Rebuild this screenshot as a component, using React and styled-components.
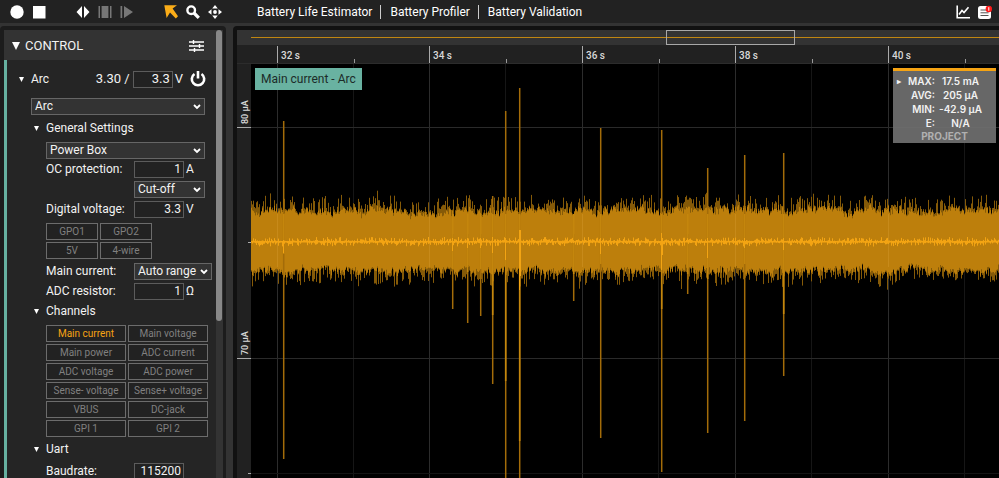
import React, { useEffect, useId, useState } from 'react';
import styled, { createGlobalStyle } from 'styled-components';

const GlobalStyle = createGlobalStyle`
    * {
        box-sizing: border-box;
    }
    body {
        margin: 0;
        background-color: #333333;
        color: #f2f2f2;
        font-family: Roboto, "Liberation Sans", sans-serif;
        font-size: 12px;
        line-height: 20px;
    }
    button, input, select {
        font: inherit;
        color: inherit;
    }
`;
const Page = styled.div`
    display: flex;
    flex-direction: column;
    height: 100vh;
    overflow: hidden;
`;
const Toolbar = styled.header`
    display: flex;
    align-items: center;
    flex: none;
    height: 23px;
    padding: 0 7px 0 10px;
    background-color: #222222;
`;
const ToolGroup = styled.div`
    display: flex;
    align-items: center;
    gap: 8px;
    margin-right: ${({ $after }) => $after || 0}px;
`;
const IconButton = styled.button`
    display: flex;
    padding: 0;
    border: none;
    background: none;
    color: ${({ $color }) => $color || '#ffffff'};
    cursor: pointer;
`;
const Nav = styled.nav`
    display: flex;
    align-items: center;
    flex: 1;
`;
const NavLink = styled.a`
    color: #ffffff;
    font-size: 12px;
    line-height: 14px;
    text-decoration: none;
    padding: 0 8px 0 9px;

    & + & {
        border-left: 1px solid #cccccc;
    }
`;
const Body = styled.div`
    display: flex;
    flex: 1;
    gap: 7px;
    min-height: 0;
    padding-top: 3px;
`;
const Sidebar = styled.aside`
    display: flex;
    flex: none;
    width: 226px;
    padding: 4px 3px 0 4px;
    border-radius: 4px 4px 0 0;
    background-color: #1c1c1c;
    overflow: hidden;
`;
const SidebarContent = styled.div`
    flex: 1;
    min-width: 0;
    overflow: hidden;
`;
const ScrollTrack = styled.div`
    width: 7px;
    background-color: #333333;
`;
const ScrollThumb = styled.div`
    width: 6px;
    height: 65%;
    border-radius: 3px;
    background-color: #888888;
`;
const PanelHeader = styled.div`
    display: flex;
    align-items: center;
    justify-content: space-between;
    height: 30px;
    padding: 2px 12px 0 8px;
    background-color: #333333;
`;
const PanelTitle = styled.h2`
    display: flex;
    align-items: center;
    gap: 5px;
    margin: 0;
    font-size: 13px;
    font-weight: 400;
`;
const Device = styled.section`
    padding: 8px 0 0 12px;
    border-left: 3px solid #66b0a0;
    background-color: #252525;
`;
const Section = styled.div`
    padding: 3px 0 0 15px;
`;
const Heading = styled.h3`
    display: flex;
    align-items: center;
    gap: 7px;
    height: 20px;
    margin: 0;
    font-size: 12px;
    font-weight: 400;
`;
const DeviceRow = styled.div`
    display: flex;
    align-items: center;
    height: 22px;
    padding-right: 10px;
`;
const Voltage = styled.div`
    display: flex;
    align-items: center;
    flex: 1;
    justify-content: flex-end;
    padding-right: 7px;
    font-size: 13px;
`;
const Reading = styled.span`
    padding-right: 3px;
`;
const Fields = styled.div`
    padding: ${({ $top }) => $top || 0}px 0 0 12px;
`;
const Field = styled.div`
    display: flex;
    align-items: center;
    height: 20px;
`;
const Label = styled.label`
    width: 88px;
    white-space: nowrap;
`;
const Input = styled.input`
    width: ${({ $width }) => $width || 50}px;
    height: 17px;
    margin-right: 2px;
    padding: 0 2px;
    border: 1px solid #5c5c5c;
    background-color: #222222;
    text-align: right;
`;
const SelectBox = styled.div`
    position: relative;
    width: ${({ $width }) => $width}px;
    margin-left: ${({ $indent }) => $indent || 0}px;
`;
const Select = styled.select`
    appearance: none;
    display: block;
    width: 100%;
    height: 17px;
    padding: 0 14px 0 3px;
    border: 1px solid #666666;
    border-radius: 0;
    background-color: #333333;
    line-height: 15px;
`;
const Chevron = styled.svg`
    position: absolute;
    top: 6px;
    right: 4px;
    pointer-events: none;
`;
const ToggleGrid = styled.div`
    display: grid;
    grid-template-columns: repeat(2, ${({ $column }) => $column}px);
    gap: 2px;
    padding: 4px 0 2px;
`;
const Toggle = styled.button`
    height: 17px;
    padding: 0;
    border: 1px solid #6c6c6c;
    background-color: #222222;
    color: ${({ $active }) => ($active ? '#f5a313' : '#808080')};
    font-size: 10px;
    line-height: 15px;
    white-space: nowrap;
    cursor: pointer;
`;
const ChartPanel = styled.main`
    display: flex;
    flex-direction: column;
    flex: 1;
    min-width: 0;
    padding: 4px 0 0 4px;
    border-radius: 4px 0 0 0;
    background-color: #111111;
`;
const Overview = styled.svg`
    flex: none;
    width: 100%;
    height: 15px;
    background-color: #333333;
`;
const Ruler = styled.svg`
    flex: none;
    width: 100%;
    height: 19px;
    border-bottom: 1px solid #2c2c2c;
    background-color: #212121;
`;
const PlotRow = styled.div`
    display: flex;
    flex: 1;
    min-height: 0;
`;
const Axis = styled.svg`
    flex: none;
    width: 14px;
    height: 100%;
    background-color: #212121;
`;
const PlotArea = styled.div`
    position: relative;
    flex: 1;
    min-width: 0;
    background-color: #000000;
`;
const Plot = styled.svg`
    display: block;
    width: 100%;
    height: 100%;
`;
const AxisText = styled.text`
    fill: #d8d8d8;
    font-size: ${({ $small }) => ($small ? 9 : 10)}px;
    font-weight: 500;
`;
const ChannelTag = styled.div`
    position: absolute;
    top: 4px;
    left: 4px;
    padding: 1px 6px;
    background-color: #69b2a1;
    color: #1c2b28;
`;
const Stats = styled.div`
    position: absolute;
    top: 4px;
    right: 3px;
    width: 103px;
    padding: 3px 14px 1px 4px;
    border-top: 3px solid #f5a313;
    background-color: rgba(112, 112, 112, 0.92);
    font-family: Inter, "Liberation Sans", sans-serif;
    font-size: 10px;
    font-weight: 600;
    line-height: 14px;
    white-space: nowrap;
`;
const StatRow = styled.div`
    display: grid;
    grid-template-columns: 38px 1fr;
    column-gap: 4px;
    position: relative;
`;
const StatName = styled.span`
    text-align: right;
`;
const StatValue = styled.span`
    text-align: center;
`;
const Marker = styled.span`
    position: absolute;
    left: 0;
    font-size: 8px;
`;
const Project = styled.div`
    padding-left: 10px;
    color: #b0b0b0;
    font-weight: 700;
    line-height: 12px;
    text-align: center;
`;

const stats = [
    ['MAX:', '17.5 mA'],
    ['AVG:', '205 µA'],
    ['MIN:', '-42.9 µA'],
    ['E:', 'N/A'],
];
const channels = [
    'Main current', 'Main voltage', 'Main power', 'ADC current',
    'ADC voltage', 'ADC power', 'Sense- voltage', 'Sense+ voltage',
    'VBUS', 'DC-jack', 'GPI 1', 'GPI 2',
];

// x, top, bottom, bottom of the brighter part
const peaks = [
    [32, 57, 395, 190], [201, 170, 245, 205], [216, 170, 259, 208], [229, 170, 252, 205],
    [241, 132, 320, 251], [254, 47, 2000, 317], [268, 24, 2000, 377], [349, 64, 374, 200],
    [410, 66, 408, 245], [456, 104, 369, 215], [493, 91, 357, 200], [532, 89, 312, 250],
    [322, 170, 237, 210], [436, 170, 230, 210],
];
const dips = {
    32: [176, 189], 201: [174, 187], 216: [174, 184], 229: [174, 184], 241: [173, 189],
    254: [174, 196], 268: [166, 226], 269: [166, 212], 349: [174, 190], 410: [169, 206],
    411: [174, 191], 456: [174, 194], 493: [174, 184], 532: [174, 186],
};

const random = (seed) => () => {
    seed = (seed * 1664525 + 1013904223) % 4294967296;
    return seed / 4294967296;
};

const buildSignal = (count) => {
    const next = random(41);
    let band = '';
    let fringe = '';
    let average = '';
    let upper = 0;
    let lower = 0;
    for (let x = 0; x < count; x++) {
        upper = upper * 0.8 + (next() - 0.5) * 4;
        lower = lower * 0.8 + (next() - 0.5) * 4;
        const top = 147 - (next() - 0.5) * 6 + upper;
        const bottom = 206 + (next() - 0.5) * 6 + lower;
        const up = top - 1 - Math.pow(next(), 2.6) * 14;
        const down = bottom + 1 + Math.pow(next(), 2.6) * 13;
        const dip = dips[x] || [177 - Math.pow(next(), 3) * 4, 178.5 + Math.pow(next(), 3) * 4];
        band += `M${x + 0.5} ${top.toFixed(1)}V${bottom.toFixed(1)}`;
        fringe += `M${x + 0.5} ${up.toFixed(1)}V${down.toFixed(1)}`;
        average += `M${x + 0.5} ${dip[0].toFixed(1)}V${dip[1].toFixed(1)}`;
    }
    return { band, fringe, average };
};
const signal = buildSignal(2400);

// Ticks that fit in the window, the last ones with room for their label
const useTicks = () => {
    const [size, setSize] = useState([window.innerWidth, window.innerHeight]);
    useEffect(() => {
        const update = () => setSize([window.innerWidth, window.innerHeight]);
        window.addEventListener('resize', update);
        return () => window.removeEventListener('resize', update);
    }, []);
    const columns = Math.max(1, Math.floor((size[0] - 310) / 152.8) + 1);
    const rows = Math.max(1, Math.floor((size[1] - 130) / 231) + 1);
    return {
        seconds: Array.from({ length: columns }, (_, i) => ({ x: Math.round(25.5 + i * 152.8), text: `${32 + i * 2} s` })),
        levels: Array.from({ length: rows }, (_, i) => ({ y: 63 + i * 231, text: `${80 - i * 10} µA` })),
    };
};

const Triangle = ({ size = 5 }) => (
    <svg width={size} height={size} viewBox="0 0 10 10" aria-hidden="true">
        <path d="M0 0H10L5 10Z" fill="#ffffff" />
    </svg>
);

const ToolIcon = ({ label, color, width = 14, children }) => (
    <IconButton type="button" aria-label={label} $color={color}>
        <svg width={width} height="14" viewBox={`0 0 ${width} 14`} fill="currentColor">{children}</svg>
    </IconButton>
);

const DropDown = ({ id, label, width, indent, value }) => (
    <SelectBox $width={width} $indent={indent}>
        <Select id={id} aria-label={label}><option>{value}</option></Select>
        <Chevron width="8" height="6" viewBox="0 0 8 6" fill="none" stroke="#ffffff" strokeWidth="1.8">
            <path d="M1 1L4 4L7 1" />
        </Chevron>
    </SelectBox>
);

const NumberField = ({ label, value, unit }) => {
    const id = useId();
    return (
        <Field>
            <Label htmlFor={id}>{label}</Label>
            <Input id={id} defaultValue={value} />
            {unit}
        </Field>
    );
};

const Toggles = ({ names, active, column }) => {
    const [selected, setSelected] = useState(active);
    return (
        <ToggleGrid $column={column}>
            {names.map((name) => (
                <Toggle
                    key={name}
                    type="button"
                    $active={name === selected}
                    aria-pressed={name === selected}
                    onClick={() => setSelected(name)}
                >
                    {name}
                </Toggle>
            ))}
        </ToggleGrid>
    );
};

const TopBar = () => (
    <Toolbar>
        <ToolGroup $after={30}>
            <ToolIcon label="Record"><circle cx="7" cy="7" r="6.7" /></ToolIcon>
            <ToolIcon label="Stop"><rect x="1" y="1" width="12.5" height="12.5" /></ToolIcon>
        </ToolGroup>
        <ToolGroup $after={30}>
            <ToolIcon label="Fit width"><path d="M6 1V13L.5 7ZM8 1V13L13.5 7Z" /></ToolIcon>
            <ToolIcon label="Fit selection" color="#777777">
                <path d="M.5 1H2V13H.5ZM3.6 1H10.4V13H3.6ZM12 1H13.5V13H12Z" />
            </ToolIcon>
            <ToolIcon label="Follow" color="#777777"><path d="M.5 1H2.2V13H.5ZM4 1L13 7L4 13Z" /></ToolIcon>
        </ToolGroup>
        <ToolGroup $after={26}>
            <ToolIcon label="Select" color="#fbad18">
                <path d="M.3 .3H13L8.6 3.6L14 11.2L11.8 13.5L6 7.4L2.6 13Z" />
            </ToolIcon>
            <ToolIcon label="Zoom">
                <g fill="none" stroke="currentColor">
                    <circle cx="5.2" cy="5.2" r="3.8" strokeWidth="2.4" />
                    <path d="M8 8L12.8 12.8" strokeWidth="3.2" />
                </g>
            </ToolIcon>
            <ToolIcon label="Move">
                <path d="M7 0L9.8 3.5H4.2ZM7 14L9.8 10.5H4.2ZM0 7L3.5 4.2V9.8ZM14 7L10.5 4.2V9.8Z" />
                <circle cx="7" cy="7" r="1.9" />
            </ToolIcon>
        </ToolGroup>
        <Nav>
            <NavLink href="#estimator">Battery Life Estimator</NavLink>
            <NavLink href="#profiler">Battery Profiler</NavLink>
            <NavLink href="#validation">Battery Validation</NavLink>
        </Nav>
        <ToolGroup>
            <ToolIcon label="Charts">
                <path d="M1.2 .5V12.7H14M3 9.5L6 5.5L8 7.5L12.5 2.2" fill="none" stroke="currentColor" strokeWidth="1.6" />
            </ToolIcon>
            <ToolIcon label="Messages">
                <rect y="1" width="13" height="13" rx="2.5" />
                <path d="M2.5 5H8M2.5 7.8H10.5M2.5 10.5H10.5" stroke="#555555" strokeWidth="1" />
                <circle cx="10.8" cy="4" r="3.2" fill="#ff1a1a" />
                <path d="M10.8 2.2V5.8" stroke="#ffffff" strokeWidth="1" />
            </ToolIcon>
        </ToolGroup>
    </Toolbar>
);

const ControlPanel = () => (
    <Sidebar>
        <SidebarContent>
            <PanelHeader>
                <PanelTitle><Triangle size={8} />CONTROL</PanelTitle>
                <IconButton type="button" aria-label="Panel settings">
                    <svg width="15" height="12" viewBox="0 0 15 12" stroke="currentColor" strokeWidth="1.4">
                        <path d="M0 2H15M0 6H15M0 10H15M4.5 0V4M10.5 4V8M5.5 8V12" />
                    </svg>
                </IconButton>
            </PanelHeader>
            <Device>
                <DeviceRow>
                    <Heading><Triangle />Arc</Heading>
                    <Voltage>
                        <Reading>3.30 /</Reading>
                        <Input $width={40} aria-label="Voltage" defaultValue="3.3" />
                        V
                    </Voltage>
                    <IconButton type="button" aria-label="Power">
                        <svg width="16" height="16" viewBox="0 0 16 16" fill="none" stroke="currentColor" strokeWidth="2.6">
                            <path d="M4.5 3A6.2 6.2 0 1 0 11.5 3M8 0V7.5" />
                        </svg>
                    </IconButton>
                </DeviceRow>
                <Fields $top={8}>
                    <DropDown width={174} label="Device" value="Arc" />
                </Fields>
                <Section>
                    <Heading><Triangle />General Settings</Heading>
                    <Fields $top={4}>
                        <DropDown width={159} label="Mode" value="Power Box" />
                        <NumberField label="OC protection:" value="1" unit="A" />
                        <Field>
                            <DropDown width={71} indent={88} label="OC action" value="Cut-off" />
                        </Field>
                        <NumberField label="Digital voltage:" value="3.3" unit="V" />
                        <Toggles names={['GPO1', 'GPO2', '5V', '4-wire']} column={52} />
                        <Field>
                            <Label htmlFor="range">Main current:</Label>
                            <DropDown id="range" width={78} value="Auto range" />
                        </Field>
                        <NumberField label="ADC resistor:" value="1" unit="Ω" />
                    </Fields>
                    <Heading><Triangle />Channels</Heading>
                    <Fields>
                        <Toggles names={channels} active="Main current" column={80} />
                    </Fields>
                    <Heading><Triangle />Uart</Heading>
                    <Fields $top={2}>
                        <NumberField label="Baudrate:" value="115200" />
                    </Fields>
                </Section>
            </Device>
        </SidebarContent>
        <ScrollTrack><ScrollThumb /></ScrollTrack>
    </Sidebar>
);

const Chart = () => {
    const { seconds, levels } = useTicks();
    return (
        <ChartPanel>
            <Overview aria-label="Recording overview">
                <path d="M14 7.5H2400" stroke="#c08611" />
                <rect x="429.5" y="0.5" width="128" height="14" fill="none" stroke="#a8a8a8" />
            </Overview>
            <Ruler aria-label="Time">
                {seconds.map(({ x, text }) => (
                    <g key={text}>
                        <path d={`M${x + 14.5} 1V18`} stroke="#aaaaaa" />
                        <path d={`M${x + 91.5} 14V18`} stroke="#999999" />
                        <AxisText x={x + 18} y="14">{text}</AxisText>
                    </g>
                ))}
            </Ruler>
            <PlotRow>
                <Axis aria-label="Current">
                    {levels.map(({ y, text }) => (
                        <g key={text}>
                            <path d={`M0 ${y + 0.5}H14M11 ${y + 115.5}H14`} stroke="#aaaaaa" />
                            <AxisText $small transform={`translate(11 ${y - 3}) rotate(-90)`}>{text}</AxisText>
                        </g>
                    ))}
                </Axis>
                <PlotArea>
                    <Plot aria-label="Main current over time">
                        {seconds.map(({ x }) => (
                            <g key={x}>
                                <path d={`M${x + 0.5} 0V2000`} stroke="#2c2c2c" />
                                <path d={`M${x + 76.5} 0V2000`} stroke="#161616" />
                            </g>
                        ))}
                        {levels.map(({ y }) => (
                            <g key={y}>
                                <path d={`M0 ${y + 0.5}H2400`} stroke="#2a2a2a" />
                                <path d={`M0 ${y + 115.5}H2400`} stroke="#141414" />
                            </g>
                        ))}
                        <path d={signal.fringe} stroke="#855a08" />
                        <path d={signal.band} stroke="#bd7f0c" />
                        {seconds.map(({ x }) => (
                            <path key={x} d={`M${x + 0.5} 150V203`} stroke="#c78a1a" />
                        ))}
                        {peaks.map(([x, top, bottom, bright]) => (
                            <g key={x}>
                                <path d={`M${x + 0.7} ${top}V${bottom}`} stroke="#a36c09" strokeWidth="1.5" />
                                <path d={`M${x + 0.7} 150V${bright}`} stroke="#c4860d" strokeWidth="1.6" />
                            </g>
                        ))}
                        <path d={signal.average} stroke="#f3a413" />
                    </Plot>
                    <ChannelTag>Main current - Arc</ChannelTag>
                    <Stats>
                        {stats.map(([name, value]) => (
                            <StatRow key={name}>
                                {name === 'MAX:' && <Marker>▸</Marker>}
                                <StatName>{name}</StatName>
                                <StatValue>{value}</StatValue>
                            </StatRow>
                        ))}
                        <Project>PROJECT</Project>
                    </Stats>
                </PlotArea>
            </PlotRow>
        </ChartPanel>
    );
};

const App = () => (
    <Page>
        <GlobalStyle />
        <TopBar />
        <Body>
            <ControlPanel />
            <Chart />
        </Body>
    </Page>
);

export default App;
